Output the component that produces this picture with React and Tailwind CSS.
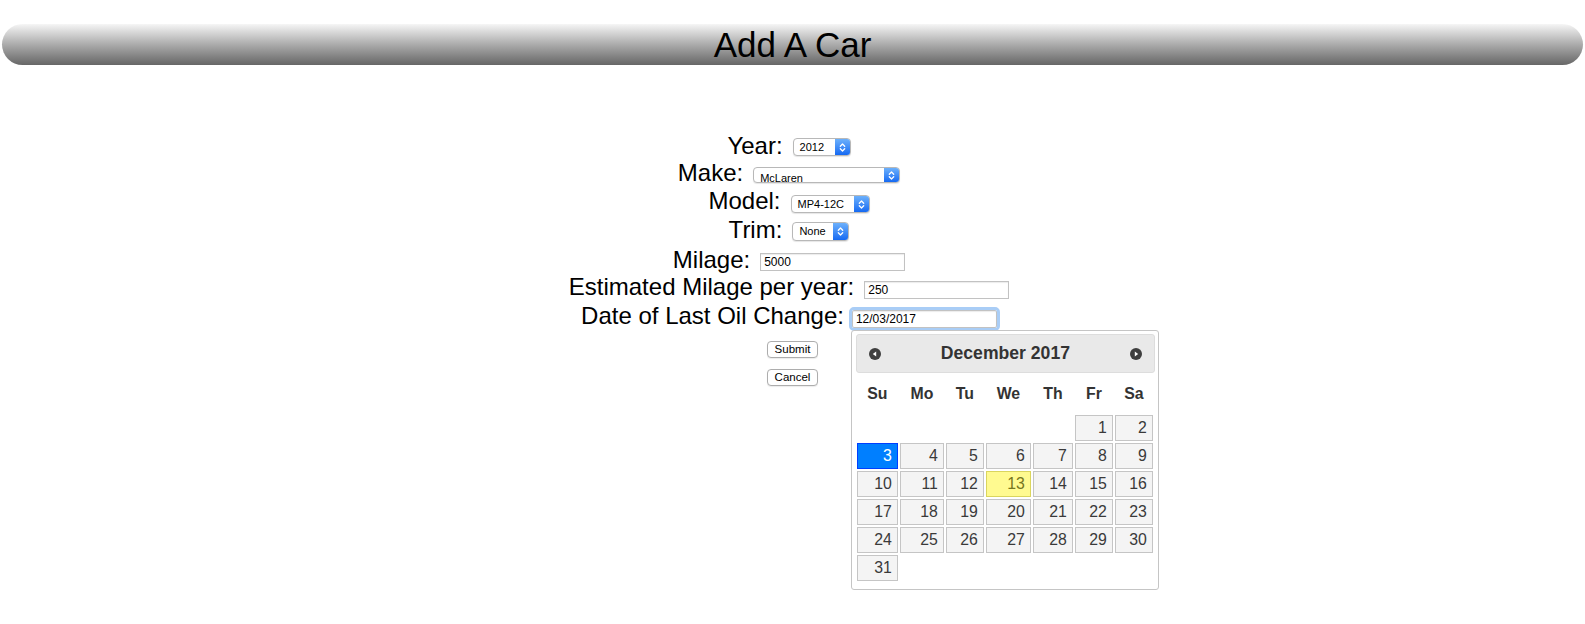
const font = "font-['Liberation_Sans',Arial,Helvetica,sans-serif]";

function Chevrons() {
  return (
    <svg width="7" height="11" viewBox="0 0 7 11" fill="none">
      <path d="M1.3 4.2 L3.5 2 L5.7 4.2" stroke="white" strokeWidth="1.3" strokeLinecap="round" strokeLinejoin="round" />
      <path d="M1.3 6.8 L3.5 9 L5.7 6.8" stroke="white" strokeWidth="1.3" strokeLinecap="round" strokeLinejoin="round" />
    </svg>
  );
}

function MacSelect({ value, width, height = 'h-[18px]', textPos = 'items-center' }) {
  return (
    <div className={`flex ${width} ${height} overflow-hidden rounded-[4px] border border-[#b8b8b8] bg-white shadow-[0_1px_1px_rgba(0,0,0,0.1)]`}>
      <span className={`flex flex-1 ${textPos} pl-[6px] text-[11px] leading-none text-black`}>{value}</span>
      <span className="flex h-full w-[15px] items-center justify-center bg-linear-to-b from-[#6cb0fb] to-[#1469f2]">
        <Chevrons />
      </span>
    </div>
  );
}

function TextInput({ value, focused }) {
  return (
    <div
      className={`flex h-[18px] w-[145px] items-center border border-[#c2c2c2] bg-white pl-[3px] text-[12px] leading-none text-black shadow-[inset_0_1px_1px_rgba(0,0,0,0.08)] ${
        focused ? 'outline-[3px] outline-solid outline-[#a9cdf6] rounded-[2px]' : ''
      }`}
    >
      {value}
    </div>
  );
}

function Arrow({ dir }) {
  return (
    <svg width="12" height="12" viewBox="0 0 12 12">
      <circle cx="6" cy="6" r="6" fill="#3f3f3f" />
      {dir === 'prev' ? (
        <polygon points="7.2,3.4 7.2,8.6 3.8,6" fill="white" />
      ) : (
        <polygon points="4.8,3.4 4.8,8.6 8.2,6" fill="white" />
      )}
    </svg>
  );
}

const days = ['Su', 'Mo', 'Tu', 'We', 'Th', 'Fr', 'Sa'];
const weeks = [
  [null, null, null, null, null, 1, 2],
  [3, 4, 5, 6, 7, 8, 9],
  [10, 11, 12, 13, 14, 15, 16],
  [17, 18, 19, 20, 21, 22, 23],
  [24, 25, 26, 27, 28, 29, 30],
  [31, null, null, null, null, null, null],
];

const cols = 'grid grid-cols-[43px_46px_40px_47px_42px_40px_40px]';

function DayCell({ d }) {
  if (d === null) return <div className="h-[28px]" />;
  let look = 'border-[#c5c5c5] bg-[#f4f4f4] text-[#3a3a3a]';
  if (d === 3) look = 'border-[#003eff] bg-[#007fff] text-white';
  if (d === 13) look = 'border-[#dad55e] bg-[#fffa90] text-[#777620]';
  return (
    <div className="h-[28px] p-[1px]">
      <div className={`flex h-[26px] items-center justify-end border pr-[5px] ${look}`}>{d}</div>
    </div>
  );
}

function Calendar() {
  return (
    <div className="absolute left-[-1px] top-[20px] z-10 w-[308px] rounded-[3px] border border-[#c5c5c5] bg-white pl-[4px] pr-[3px] pt-[3px] pb-[1px]">
      <div className="flex h-[39px] items-center justify-between rounded-[3px] border border-[#dddddd] bg-[#e9e9e9] px-[12px]">
        <Arrow dir="prev" />
        <span className="text-[17.6px] font-bold text-[#333333]">December 2017</span>
        <Arrow dir="next" />
      </div>
      <div className="mb-[6px] text-[15.84px] text-[#333333]">
        <div className={`${cols} h-[41px] items-center font-bold`}>
          {days.map((d) => (
            <div key={d} className="text-center">{d}</div>
          ))}
        </div>
        {weeks.map((w, i) => (
          <div key={i} className={cols}>
            {w.map((d, j) => (
              <DayCell key={j} d={d} />
            ))}
          </div>
        ))}
      </div>
    </div>
  );
}

function Row({ label, h, mt, ml = 'ml-[10px]', children }) {
  return (
    <div className={`flex justify-center pr-[7px] ${h}`}>
      <span className="mt-[2px] text-[24px] leading-[27px] text-black">{label}</span>
      <div className={`${ml} ${mt}`}>{children}</div>
    </div>
  );
}

function Btn({ children }) {
  return (
    <div className="flex justify-center">
      <div className="flex h-[17px] w-[51px] items-center justify-center rounded-[4px] border border-[#adadad] bg-white text-[11.5px] leading-none text-black shadow-[0_1px_1px_rgba(0,0,0,0.08)]">
        {children}
      </div>
    </div>
  );
}

export default function App() {
  return (
    <div className={`min-h-[624px] w-full bg-white px-[2px] pt-[24px] ${font}`}>
      <div className="flex h-[41px] items-center justify-center rounded-full bg-linear-to-b from-[#f6f6f6] to-[#676767]">
        <h1 className="text-[35px] leading-[41px] text-black">Add A Car</h1>
      </div>

      <div className="mt-[65px]">
        <Row label="Year:" h="h-[27px]" mt="mt-[8px]">
          <MacSelect value="2012" width="w-[58px]" />
        </Row>
        <Row label="Make:" h="h-[28px]" mt="mt-[10px]">
          <MacSelect value="McLaren" width="w-[147px]" height="h-[16px]" textPos="items-start pt-[5px]" />
        </Row>
        <Row label="Model:" h="h-[29px]" mt="mt-[10px]">
          <MacSelect value="MP4-12C" width="w-[79px]" />
        </Row>
        <Row label="Trim:" h="h-[30px]" mt="mt-[8px]">
          <MacSelect value="None" width="w-[57px]" height="h-[19px]" />
        </Row>
        <Row label="Milage:" h="h-[27px]" mt="mt-[9px]">
          <TextInput value="5000" />
        </Row>
        <Row label="Estimated Milage per year:" h="h-[29px]" mt="mt-[10px]">
          <TextInput value="250" />
        </Row>
        <Row label="Date of Last Oil Change:" h="h-[32px]" mt="mt-[10px]" ml="ml-[8px]">
          <div className="relative">
            <TextInput value="12/03/2017" focused />
            <Calendar />
          </div>
        </Row>

        <div className="mt-[9px]">
          <Btn>Submit</Btn>
        </div>
        <div className="mt-[11px]">
          <Btn>Cancel</Btn>
        </div>
      </div>
    </div>
  );
}
